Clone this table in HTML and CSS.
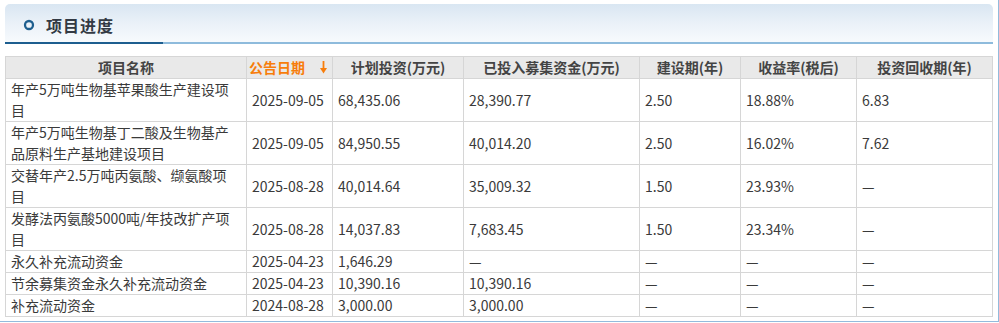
FILE: index.html
```html
<!DOCTYPE html>
<html lang="zh-CN">
<head>
<meta charset="utf-8">
<title>项目进度</title>
<link rel="stylesheet" href="styles.css">
</head>
<body>
<div class="panel">
  <div class="head">
    <svg class="dot" width="12" height="12" viewBox="0 0 12 12"><circle cx="6" cy="6" r="4" fill="none" stroke="#1e5f8f" stroke-width="2.3"/></svg>
    <span class="title">项目进度</span>
  </div>
  <div class="tab-line"></div>
  <table class="grid">
    <colgroup>
      <col class="c1"><col class="c2"><col class="c3"><col class="c4"><col class="c5"><col class="c6"><col class="c7">
    </colgroup>
    <thead>
      <tr>
        <th>项目名称</th>
        <th class="sort">公告日期<svg class="arrow" width="7" height="13" viewBox="0 0 7 13"><rect x="2.6" y="0" width="1.8" height="8" fill="#f77d0b"/><path d="M0 7 L7 7 L3.5 12.5 Z" fill="#f77d0b"/></svg></th>
        <th>计划投资(万元)</th>
        <th>已投入募集资金(万元)</th>
        <th>建设期(年)</th>
        <th>收益率(税后)</th>
        <th>投资回收期(年)</th>
      </tr>
    </thead>
    <tbody>
      <tr><td class="name">年产5万吨生物基苹果酸生产建设项目</td><td>2025-09-05</td><td>68,435.06</td><td>28,390.77</td><td>2.50</td><td>18.88%</td><td>6.83</td></tr>
      <tr><td class="name">年产5万吨生物基丁二酸及生物基产品原料生产基地建设项目</td><td>2025-09-05</td><td>84,950.55</td><td>40,014.20</td><td>2.50</td><td>16.02%</td><td>7.62</td></tr>
      <tr><td class="name">交替年产2.5万吨丙氨酸、缬氨酸项目</td><td>2025-08-28</td><td>40,014.64</td><td>35,009.32</td><td>1.50</td><td>23.93%</td><td>—</td></tr>
      <tr><td class="name">发酵法丙氨酸5000吨/年技改扩产项目</td><td>2025-08-28</td><td>14,037.83</td><td>7,683.45</td><td>1.50</td><td>23.34%</td><td>—</td></tr>
      <tr><td class="name">永久补充流动资金</td><td>2025-04-23</td><td>1,646.29</td><td>—</td><td>—</td><td>—</td><td>—</td></tr>
      <tr><td class="name">节余募集资金永久补充流动资金</td><td>2025-04-23</td><td>10,390.16</td><td>10,390.16</td><td>—</td><td>—</td><td>—</td></tr>
      <tr><td class="name">补充流动资金</td><td>2024-08-28</td><td>3,000.00</td><td>3,000.00</td><td>—</td><td>—</td><td>—</td></tr>
    </tbody>
  </table>
</div>
</body>
</html>
```
FILE: styles.css
```css
html, body {
  margin: 0;
  padding: 0;
  background: #ffffff;
}
body {
  font-family: "Noto Sans CJK SC", "Noto Sans", sans-serif;
  color: #333333;
}
.panel {
  width: 988px;
  padding: 4px 5px 4px 5px;
  border-right: 1px solid #93bbdc;
  border-bottom: 1px solid #93bbdc;
}
.head {
  height: 38px;
  display: flex;
  align-items: center;
  padding: 3px 0 0 18px;
  box-sizing: border-box;
  border-radius: 5px 5px 0 0;
  background: linear-gradient(to bottom, #d9e6f2 0%, #eaf1f8 50%, #f7fafd 100%);
}
.dot {
  display: block;
  margin-right: 11px;
}
.title {
  font-size: 16px;
  font-weight: bold;
  letter-spacing: 1px;
  color: #333a44;
}
.tab-line {
  height: 2px;
  background: linear-gradient(to right, #1d5e8f 158px, #8ebbdc 158px);
  margin-bottom: 12px;
}
.grid {
  width: 988px;
  table-layout: fixed;
  border-collapse: collapse;
  font-size: 14px;
  line-height: 21px;
}
.c1 { width: 241px; }
.c2 { width: 86px; }
.c3 { width: 131px; }
.c4 { width: 176px; }
.c5 { width: 101px; }
.c6 { width: 116px; }
.c7 { width: 136px; }
.grid th, .grid td {
  border: 1px solid #d6d6d6;
  padding: 0 4px 0 5px;
  vertical-align: middle;
  white-space: nowrap;
  overflow: hidden;
}
.grid th {
  background: #e9e9e9;
  font-weight: bold;
  color: #444444;
  text-align: center;
  padding: 0;
}
.grid th.sort {
  color: #f77d0b;
  text-align: left;
  padding-left: 2px;
}
.arrow {
  display: inline-block;
  vertical-align: -1px;
  margin-left: 15px;
}
.grid td {
  text-align: left;
  color: #3a3a3a;
}
.grid td.name {
  white-space: normal;
  padding-right: 12px;
}
```
